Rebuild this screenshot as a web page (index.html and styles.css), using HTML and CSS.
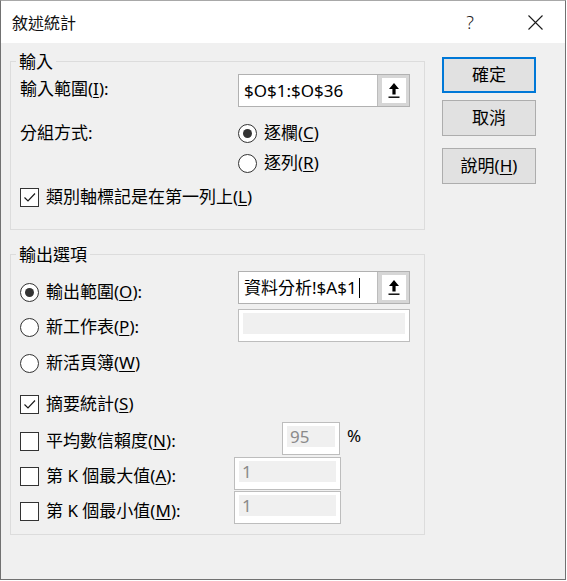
FILE: index.html
```html
<!DOCTYPE html>
<html lang="zh-Hant">
<head>
  <meta charset="UTF-8" />
  <title>敘述統計</title>
  <link rel="stylesheet" href="styles.css">
</head>
<body>
  <div class="window">
    <div class="titlebar">
      <span class="title">敘述統計</span>
      <span class="help">?</span>
      <svg class="close" width="15" height="15" viewBox="0 0 15 15">
        <path d="M0.5 0.5 L14.5 14.5 M14.5 0.5 L0.5 14.5" stroke="#1a1a1a" stroke-width="1.1" fill="none" />
      </svg>
    </div>

    <div class="content">
      <div class="main">
        <fieldset class="group group-input">
          <legend>輸入</legend>

          <div class="row in-range">
            <span class="label">輸入範圍(<u>I</u>):</span>
            <div class="ref-field">
              <span class="val">$O$1:$O$36</span>
              <span class="ref-btn">
                <svg width="12" height="17" viewBox="0 0 12 17">
                  <path d="M6 1 L11 7 H7.6 V12.5 H4.4 V7 H1 Z" fill="#000" />
                  <rect x="0.5" y="14.5" width="11" height="1.4" fill="#000" />
                </svg>
              </span>
            </div>
          </div>

          <div class="row by-col">
            <span class="label">分組方式:</span>
            <span class="opt"><span class="radio on"></span><span class="txt">逐欄(<u>C</u>)</span></span>
          </div>

          <div class="row by-row">
            <span class="label"></span>
            <span class="opt"><span class="radio"></span><span class="txt">逐列(<u>R</u>)</span></span>
          </div>

          <div class="row first-row">
            <span class="opt">
              <span class="check">
                <svg width="17" height="17" viewBox="0 0 17 17"><path d="M3.5 8.5 L7 12 L14 4.5" stroke="#1a1a1a" stroke-width="1.2" fill="none" /></svg>
              </span><span class="txt">類別軸標記是在第一列上(<u>L</u>)</span>
            </span>
          </div>
        </fieldset>

        <fieldset class="group group-output">
          <legend>輸出選項</legend>

          <div class="row out-range">
            <span class="opt w-col"><span class="radio on"></span><span class="txt">輸出範圍(<u>O</u>):</span></span>
            <div class="ref-field">
              <span class="val">資料分析!$A$1<span class="caret"></span></span>
              <span class="ref-btn">
                <svg width="12" height="17" viewBox="0 0 12 17">
                  <path d="M6 1 L11 7 H7.6 V12.5 H4.4 V7 H1 Z" fill="#000" />
                  <rect x="0.5" y="14.5" width="11" height="1.4" fill="#000" />
                </svg>
              </span>
            </div>
          </div>

          <div class="row new-sheet">
            <span class="opt w-col"><span class="radio"></span><span class="txt">新工作表(<u>P</u>):</span></span>
            <div class="dis-field w-wide"><span class="fill"></span></div>
          </div>

          <div class="row new-book">
            <span class="opt"><span class="radio"></span><span class="txt">新活頁簿(<u>W</u>)</span></span>
          </div>

          <div class="row summary">
            <span class="opt">
              <span class="check">
                <svg width="17" height="17" viewBox="0 0 17 17"><path d="M3.5 8.5 L7 12 L14 4.5" stroke="#1a1a1a" stroke-width="1.2" fill="none" /></svg>
              </span><span class="txt">摘要統計(<u>S</u>)</span>
            </span>
          </div>

          <div class="row confidence">
            <span class="opt w-conf"><span class="check"></span><span class="txt">平均數信賴度(<u>N</u>):</span></span>
            <div class="dis-field w-small"><span class="fill">95</span></div>
            <span class="pct">%</span>
          </div>

          <div class="row kth-large">
            <span class="opt w-kth"><span class="check"></span><span class="txt">第 K 個最大值(<u>A</u>):</span></span>
            <div class="dis-field w-mid"><span class="fill">1</span></div>
          </div>

          <div class="row kth-small">
            <span class="opt w-kth"><span class="check"></span><span class="txt">第 K 個最小值(<u>M</u>):</span></span>
            <div class="dis-field w-mid"><span class="fill">1</span></div>
          </div>
        </fieldset>
      </div>

      <div class="side">
        <div class="btn default">確定</div>
        <div class="btn cancel">取消</div>
        <div class="btn help-btn">說明(<u>H</u>)</div>
      </div>
    </div>
  </div>
</body>
</html>
```

FILE: styles.css
```css
html, body {
  margin: 0;
  padding: 0;
  background: #ffffff;
}

body {
  font-family: "Noto Sans", "Noto Sans CJK TC", sans-serif;
  font-size: 17px;
  color: #000;
}

u {
  text-decoration-thickness: 1px;
  text-underline-offset: 2px;
}

.window {
  width: 566px;
  height: 580px;
  box-sizing: border-box;
  border: 1px solid #717171;
  border-top-color: #a8a8a8;
  background: #f0f0f0;
  display: flex;
  flex-direction: column;
}

.titlebar {
  height: 42px;
  flex: none;
  background: #ffffff;
  display: flex;
  align-items: center;
  padding: 0 22px 0 11px;
}

.title {
  flex: 1;
  font-size: 16px;
  color: #111;
}

.help {
  font-size: 18px;
  font-weight: 300;
  color: #222;
  margin-right: 54px;
}

.close {
  display: block;
}

.content {
  flex: 1;
  display: flex;
  gap: 17px;
  padding: 9px 29px 0 9px;
}

.main {
  width: 415px;
}

/* group boxes */
.group {
  margin: 0;
  border: 1px solid #dcdcdc;
  min-width: 0;
}

.group legend {
  padding: 0 3px;
  margin-left: -4px;
  line-height: 19px;
}

.group-input {
  padding: 0 13px 22px 9px;
}

.group-output {
  margin-top: 15px;
  padding: 0 13px 10px 9px;
}

.row {
  display: flex;
  align-items: flex-start;
}

.label {
  width: 218px;
  flex: none;
  line-height: 20px;
}

.opt {
  display: flex;
  align-items: center;
  height: 20px;
  line-height: 20px;
  white-space: nowrap;
}

.txt {
  margin-left: 7px;
}

.w-col { width: 218px; flex: none; }
.w-conf { width: 262px; flex: none; }
.w-kth { width: 214px; flex: none; }

/* row spacing, input group */
.in-range { margin-top: 3px; height: 33px; }
.in-range .label { margin-top: 5px; }
.by-col { margin-top: 16px; }
.by-row { margin-top: 10px; }
.first-row { margin-top: 14px; }

/* row spacing, output group */
.out-range { margin-top: 7px; height: 33px; }
.out-range .opt { margin-top: 11px; }
.new-sheet { margin-top: 5px; height: 33px; }
.new-sheet .opt { margin-top: 8px; }
.new-book { margin-top: 11px; }
.summary { margin-top: 21px; }
.confidence { margin-top: 8px; height: 33px; }
.confidence .opt { margin-top: 9px; }
.kth-large { margin-top: 2px; height: 33px; }
.kth-large .opt { margin-top: 9px; }
.kth-small { margin-top: 1px; height: 33px; }
.kth-small .opt { margin-top: 10px; }

.pct {
  margin-left: 7px;
  margin-top: 4px;
  line-height: 20px;
}

/* radio and check boxes */
.radio {
  width: 19px;
  height: 19px;
  box-sizing: border-box;
  border: 1px solid #333;
  border-radius: 50%;
  background: #fff;
  flex: none;
  display: flex;
  align-items: center;
  justify-content: center;
}

.radio.on::after {
  content: "";
  width: 9px;
  height: 9px;
  border-radius: 50%;
  background: #333;
}

.check {
  width: 19px;
  height: 19px;
  box-sizing: border-box;
  border: 1px solid #333;
  background: #fff;
  flex: none;
  display: flex;
  align-items: center;
  justify-content: center;
}

.check svg {
  display: block;
}

/* text fields */
.ref-field {
  width: 172px;
  height: 33px;
  box-sizing: border-box;
  border: 1px solid #b1b1b1;
  background: #fff;
  display: flex;
}

.ref-field .val {
  flex: 1;
  padding-left: 5px;
  line-height: 29px;
  white-space: nowrap;
  display: flex;
  align-items: center;
}

.caret {
  display: inline-block;
  width: 1px;
  height: 20px;
  background: #000;
  margin-left: 2px;
}

.ref-btn {
  width: 31px;
  box-sizing: border-box;
  border: 3px solid #d6d6d6;
  border-left: 4px solid #d6d6d6;
  box-shadow: -1px 0 0 #bcbcbc;
  background: #fff;
  display: flex;
  align-items: center;
  justify-content: center;
}

.ref-btn svg {
  display: block;
}

.dis-field {
  height: 33px;
  box-sizing: border-box;
  border: 1px solid #bdbdbd;
  background: #fff;
  padding: 3px 4px 7px 4px;
  flex: none;
}

.dis-field .fill {
  display: block;
  height: 100%;
  background: #f0f0f0;
  color: #8a8a8a;
  padding-left: 3px;
  line-height: 21px;
}

.w-wide { width: 172px; }
.w-small { width: 58px; }
.w-mid { width: 107px; }

/* buttons */
.side {
  width: 94px;
  padding-top: 5px;
  display: flex;
  flex-direction: column;
}

.btn {
  height: 36px;
  box-sizing: border-box;
  background: #e1e1e1;
  border: 1px solid #adadad;
  text-align: center;
  line-height: 33px;
}

.btn.default {
  border: 2px solid #0078d7;
  line-height: 31px;
}

.cancel { margin-top: 7px; }
.help-btn { margin-top: 12px; }
```
